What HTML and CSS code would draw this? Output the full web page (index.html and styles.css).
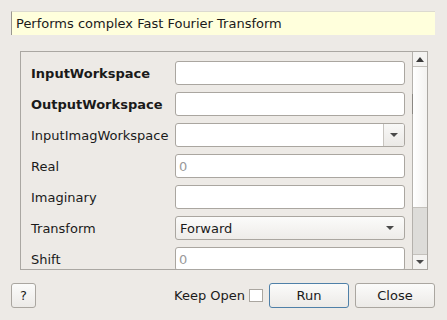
FILE: index.html
```html
<!DOCTYPE html>
<html>
<head>
<meta charset="utf-8">
<title>Algorithm dialog</title>
<link rel="stylesheet" href="styles.css">
</head>
<body>
<div class="dialog">
    <div class="desc">Performs complex Fast Fourier Transform</div>

    <div class="scrollbox">
        <div class="props">
            <div class="row">
                <span class="label bold">InputWorkspace</span>
                <div class="field"></div>
            </div>
            <div class="row">
                <span class="label bold">OutputWorkspace</span>
                <div class="field"></div>
            </div>
            <div class="row">
                <span class="label">InputImagWorkspace</span>
                <div class="field combo edit"><span class="combo-btn"><i class="arrow-down"></i></span></div>
            </div>
            <div class="row">
                <span class="label">Real</span>
                <div class="field"><span class="hint">0</span></div>
            </div>
            <div class="row">
                <span class="label">Imaginary</span>
                <div class="field"></div>
            </div>
            <div class="row">
                <span class="label">Transform</span>
                <div class="field combo"><span class="value">Forward</span><i class="arrow-down"></i></div>
            </div>
            <div class="row">
                <span class="label">Shift</span>
                <div class="field"><span class="hint">0</span></div>
            </div>
        </div>
        <div class="vscroll">
            <div class="sb-btn"><i class="arrow-up"></i></div>
            <div class="sb-handle"></div>
            <div class="sb-track"></div>
            <div class="sb-btn bottom"><i class="arrow-down"></i></div>
        </div>
    </div>

    <div class="buttons">
        <button class="btn help">?</button>
        <span class="spacer"></span>
        <span class="keep">Keep Open</span>
        <span class="check"></span>
        <button class="btn run">Run</button>
        <button class="btn">Close</button>
    </div>
</div>
</body>
</html>
```

FILE: styles.css
```css
* {
    box-sizing: border-box;
}

body {
    margin: 0;
    background: #edeae6;
    font-family: "DejaVu Sans", sans-serif;
    font-size: 13px;
    color: #1a1a1a;
}

.dialog {
    width: 447px;
    height: 320px;
    padding: 11px 12px 0 11px;
}

.desc {
    height: 24px;
    background: #ffffdc;
    border-left: 1px solid #9a9790;
    border-top: 1px solid #dcdad0;
    padding-left: 4px;
    line-height: 23px;
}

.scrollbox {
    margin: 16px 7px 0 9px;
    height: 219px;
    border: 1px solid #aaa7a2;
    display: flex;
    overflow: hidden;
}

.props {
    flex: 1;
    padding: 9px 6px 0 10px;
    display: flex;
    flex-direction: column;
    gap: 7px;
    overflow: hidden;
}

.row {
    display: flex;
    align-items: center;
    height: 24px;
    flex-shrink: 0;
}

.label {
    width: 144px;
}

.bold {
    font-weight: bold;
}

.field {
    width: 230px;
    height: 24px;
    background: #fff;
    border: 1px solid #aaa6a0;
    border-radius: 3px;
    display: flex;
    align-items: center;
    position: relative;
}

.hint {
    color: #9a9a9a;
    padding-left: 3px;
}

.combo.edit {
    justify-content: flex-end;
}

.combo-btn {
    width: 21px;
    height: 22px;
    border-left: 1px solid #c8c5c0;
    background: linear-gradient(#f8f8f7, #ebe9e6);
    border-radius: 0 2px 2px 0;
    display: flex;
    align-items: center;
    justify-content: center;
}

.combo:not(.edit) {
    background: linear-gradient(#fbfbfa, #eeece9);
    padding: 0 10px 0 4px;
    justify-content: space-between;
}

.arrow-down,
.arrow-up {
    display: block;
    width: 0;
    height: 0;
    border-left: 4px solid transparent;
    border-right: 4px solid transparent;
}

.arrow-down {
    border-top: 4px solid #4a4a4a;
}

.arrow-up {
    border-bottom: 5px solid #3a3a3a;
}

.vscroll {
    width: 15px;
    border-left: 1px solid #b4b1ac;
    display: flex;
    flex-direction: column;
    background: #dddcd9;
}

.sb-btn {
    height: 15px;
    background: #f4f3f1;
    border-bottom: 1px solid #c4c1bc;
    display: flex;
    align-items: center;
    justify-content: center;
}

.sb-btn.bottom {
    border-bottom: none;
    border-top: 1px solid #c4c1bc;
}

.sb-handle {
    height: 141px;
    background: linear-gradient(to right, #ffffff, #f3f2f0);
    border-bottom: 1px solid #c4c1bc;
    position: relative;
}

.sb-handle::before {
    content: "";
    position: absolute;
    left: -1px;
    top: 27px;
    height: 20px;
    border-left: 1px solid #8a8782;
}

.sb-track {
    flex: 1;
}

.buttons {
    margin-top: 13px;
    display: flex;
    align-items: center;
    height: 25px;
}

.btn {
    font-family: "DejaVu Sans", sans-serif;
    font-size: 13px;
    color: #1a1a1a;
    width: 80px;
    height: 25px;
    border: 1px solid #aaa6a0;
    border-radius: 3px;
    background: linear-gradient(#fbfbfa, #eceae7);
    padding: 0;
}

.btn.help {
    width: 25px;
}

.btn.run {
    border-color: #4f80a8;
    margin-right: 6px;
}

.spacer {
    flex: 1;
}

.keep {
    margin-right: 4px;
}

.check {
    width: 14px;
    height: 13px;
    background: #fff;
    border: 1px solid #aaa6a0;
    margin-right: 6px;
}
```
